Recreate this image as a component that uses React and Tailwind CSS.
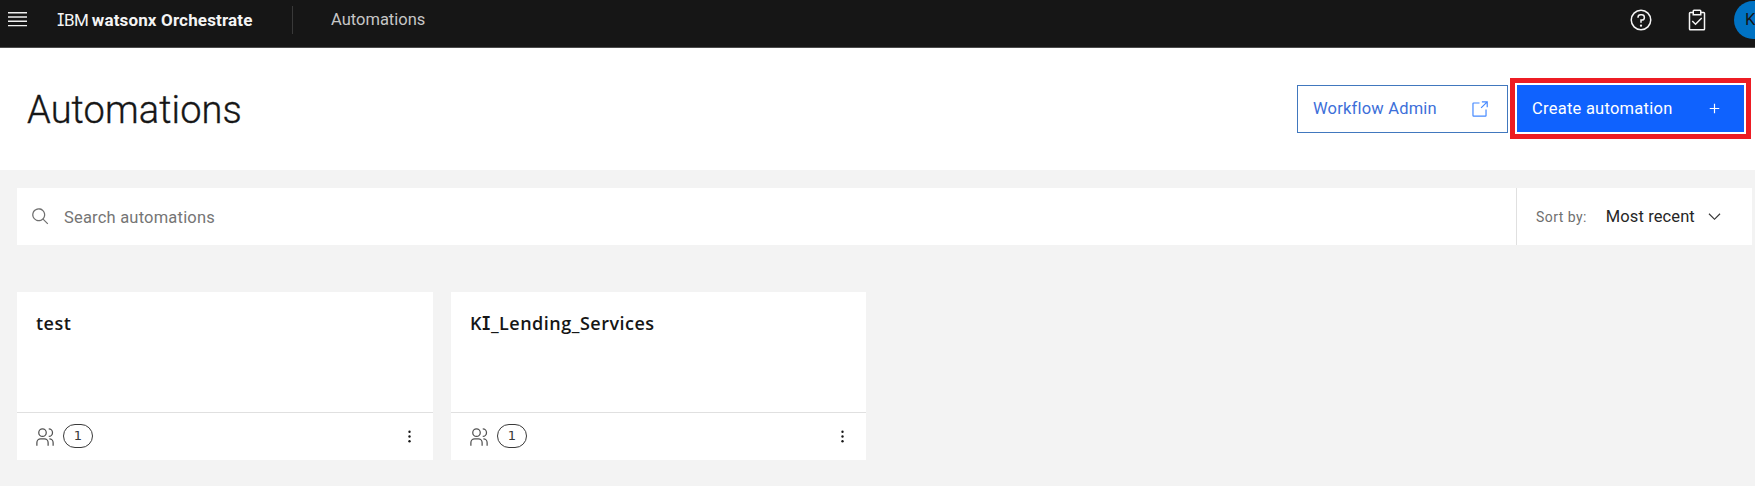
import React from "react";

function Icon({ size, className = "", children }) {
  return (
    <svg width={size} height={size} viewBox="0 0 32 32" fill="currentColor" className={`shrink-0 ${className}`} aria-hidden="true">
      {children}
    </svg>
  );
}

const Help = (p) => (
  <Icon {...p}>
    <path d="M16,2A14,14,0,1,0,30,16,14,14,0,0,0,16,2Zm0,26A12,12,0,1,1,28,16,12,12,0,0,1,16,28Z" />
    <circle cx="16" cy="23.5" r="1.5" />
    <path d="M17,8H15.5A4.49,4.49,0,0,0,11,12.5V13h2v-.5A2.5,2.5,0,0,1,15.5,10H17a2.5,2.5,0,0,1,0,5H15v4.5h2V17a4.5,4.5,0,0,0,0-9Z" />
  </Icon>
);
const Task = (p) => (
  <Icon {...p}>
    <path d="M14 20.18 10.41 16.59 9 18 14 23 23 14 21.59 12.58z" />
    <path d="M25,5H22V4a2,2,0,0,0-2-2H12a2,2,0,0,0-2,2V5H7A2,2,0,0,0,5,7V28a2,2,0,0,0,2,2H25a2,2,0,0,0,2-2V7A2,2,0,0,0,25,5ZM12,4h8V8H12ZM25,28H7V7h3v3H22V7h3Z" />
  </Icon>
);
const Launch = (p) => (
  <Icon {...p}>
    <path d="M26,28H6a2,2,0,0,1-2-2V6A2,2,0,0,1,6,4H16V6H6V26H26V16h2V26A2,2,0,0,1,26,28Z" />
    <path d="M20 2V4H26.586L18 12.586 19.414 14 28 5.414V12H30V2z" />
  </Icon>
);
const Add = (p) => (
  <Icon {...p}>
    <path d="M17 15V8H15V15H8V17H15V24H17V17H24V15z" />
  </Icon>
);
const Search = (p) => (
  <Icon {...p}>
    <path d="M29,27.586l-7.552-7.552a11.018,11.018,0,1,0-1.414,1.414L27.586,29ZM4,13a9,9,0,1,1,9,9A9.01,9.01,0,0,1,4,13Z" />
  </Icon>
);
const ChevronDown = (p) => (
  <Icon {...p}>
    <path d="M16 22 6 12 7.4 10.6 16 19.2 24.6 10.6 26 12z" />
  </Icon>
);
const Overflow = (p) => (
  <Icon {...p}>
    <circle cx="16" cy="8" r="2" />
    <circle cx="16" cy="16" r="2" />
    <circle cx="16" cy="24" r="2" />
  </Icon>
);
const Users = (p) => (
  <Icon {...p}>
    <path d="M30,30H28V25a5,5,0,0,0-5-5V18a7,7,0,0,1,7,7Z" />
    <path d="M22,30H20V25a5,5,0,0,0-5-5H9a5,5,0,0,0-5,5v5H2V25A7,7,0,0,1,9,18h6a7,7,0,0,1,7,7Z" />
    <path d="M22,2V4a5,5,0,0,1,0,10v2A7,7,0,0,0,22,2Z" />
    <path d="M12,4A5,5,0,1,1,7,9a5,5,0,0,1,5-5m0-2a7,7,0,1,0,7,7A7,7,0,0,0,12,2Z" />
  </Icon>
);

// Capital I with slab serifs
const SlabI = () => <span className="font-['Inter',sans-serif] [font-feature-settings:'cv08'_1,'ss02'_1]">I</span>;

function Card({ title, width }) {
  return (
    <article className={`flex h-[168px] flex-col bg-white ${width}`}>
      <h2 className="h-[120px] pl-[19px] pt-[19px] font-['Open_Sans',sans-serif] text-[18px] leading-6 font-semibold tracking-[0.5px] text-[#161616]">{title}</h2>
      <footer className="flex h-12 items-center border-t border-[#e0e0e0] pl-[18px] pr-[14px]">
        <Users size={20} className="text-[#525252]" />
        <span className="mb-px ml-[8px] flex h-6 w-[30px] items-center justify-center rounded-full border border-[#393939] font-['DejaVu_Sans',sans-serif] text-[13px] text-[#393939]">1</span>
        <Overflow size={19} className="ml-auto text-[#161616]" />
      </footer>
    </article>
  );
}

export default function App() {
  return (
    <div className="h-[486px] w-[1755px] overflow-hidden bg-[#f3f3f3] font-['Roboto',sans-serif] text-[#161616]">
      <header className="flex h-12 items-start border-b border-[#4c4c4c] bg-[#161616] text-white">
        <svg width="20" height="16" viewBox="0 0 20 16" className="ml-[8px] mt-[11px] shrink-0" aria-hidden="true">
          <path d="M0 1.7H19M0 6H19M0 10.3H19M0 14.6H19" stroke="#f0f0f0" strokeWidth="1.4" />
        </svg>
        <div className="ml-[29px] mt-[8px] w-[235px] text-[17px] leading-6 whitespace-nowrap text-[#f4f4f4]">
          <span className="tracking-[-0.6px]"><SlabI />BM </span><b className="font-bold tracking-[0.15px]">watsonx Orchestrate</b>
        </div>
        <div className="mt-[6px] h-7 w-px bg-[#393939]" />
        <div className="ml-[38px] mt-[8px] text-[16.5px] leading-6 text-[#c6c6c6]">Automations</div>
        <Help size={24} className="ml-auto mt-[8px] text-[#f4f4f4]" />
        <Task size={24} className="ml-[32px] mt-[8px] text-[#f4f4f4]" />
        <div className="mt-[1px] ml-[25px] -mr-[17px] flex size-[38px] shrink-0 items-center rounded-full bg-[#0072c3] pl-[11px] text-[16.5px] text-[#161616]">K</div>
      </header>

      <section className="flex h-[122px] items-start bg-white">
        <h1 className="ml-[27px] mt-[38px] text-[38px] leading-[48px] font-light tracking-[0.1px] [-webkit-text-stroke:0.35px_#161616]">Automations</h1>
        <button className="ml-auto mt-[37px] flex h-12 w-[211px] items-center border border-[#4178be] pl-[15px] text-[16.5px] text-[#3d6fd9]">
          <span className="pt-px tracking-[0.2px]">Workflow Admin</span>
          <Launch size={19} className="mr-[18px] ml-auto text-[#4589ff]" />
        </button>
        <div className="mt-[30px] ml-[2px] mr-[4px] border-[5px] border-[#ed1c24] p-[2px]">
          <button className="flex h-[47px] w-[227px] items-center bg-[#0f62fe] pl-[15px] text-[16.5px] text-white">
            <span className="pt-px tracking-[0.25px]">Create automation</span>
            <Add size={19} className="mr-[20px] ml-auto" />
          </button>
        </div>
      </section>

      <main className="pl-[17px]">
        <div className="mt-[18px] flex h-[57px] w-[1735px]">
          <div className="flex w-[1499px] items-center bg-white pl-[14px] text-[16.5px] text-[#757575]">
            <Search size={19} className="text-[#6f6f6f]" />
            <span className="ml-[14px] pt-[3px] tracking-[0.2px]">Search automations</span>
          </div>
          <div className="flex flex-1 items-center border-l border-[#e0e0e0] bg-white pl-[19px]">
            <span className="pt-px text-[14px] tracking-[0.45px] text-[#6f6f6f]">Sort by:</span>
            <span className="ml-[19px] pt-0.5 text-[16.5px] tracking-[0.1px] text-[#262626]">Most recent</span>
            <ChevronDown size={19} className="ml-[10px] text-[#393939]" />
          </div>
        </div>
        <div className="mt-[47px] flex gap-[18px]">
          <Card title="test" width="w-[416px]" />
          <Card title={<>K<SlabI />_Lending_Services</>} width="w-[415px]" />
        </div>
      </main>
    </div>
  );
}
